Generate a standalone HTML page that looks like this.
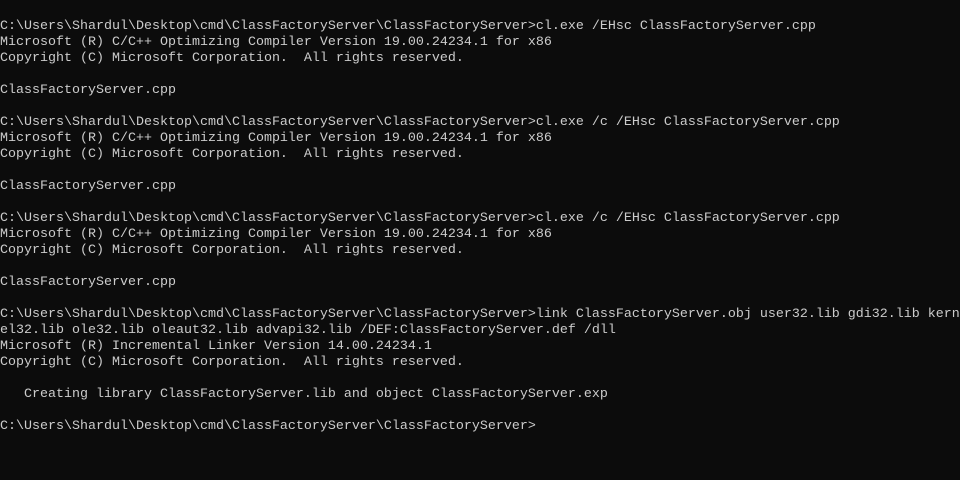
<!DOCTYPE html><html><head><style>
html,body{margin:0;background:#0c0c0c;width:960px;height:480px;overflow:hidden}
pre{margin:0;padding:19px 0 0 0;color:#cccccc;font-family:"Liberation Mono",monospace;font-size:13.33px;line-height:16px;white-space:pre}
</style></head><body><pre>C:\Users\Shardul\Desktop\cmd\ClassFactoryServer\ClassFactoryServer>cl.exe /EHsc ClassFactoryServer.cpp
Microsoft (R) C/C++ Optimizing Compiler Version 19.00.24234.1 for x86
Copyright (C) Microsoft Corporation.  All rights reserved.

ClassFactoryServer.cpp

C:\Users\Shardul\Desktop\cmd\ClassFactoryServer\ClassFactoryServer>cl.exe /c /EHsc ClassFactoryServer.cpp
Microsoft (R) C/C++ Optimizing Compiler Version 19.00.24234.1 for x86
Copyright (C) Microsoft Corporation.  All rights reserved.

ClassFactoryServer.cpp

C:\Users\Shardul\Desktop\cmd\ClassFactoryServer\ClassFactoryServer>cl.exe /c /EHsc ClassFactoryServer.cpp
Microsoft (R) C/C++ Optimizing Compiler Version 19.00.24234.1 for x86
Copyright (C) Microsoft Corporation.  All rights reserved.

ClassFactoryServer.cpp

C:\Users\Shardul\Desktop\cmd\ClassFactoryServer\ClassFactoryServer>link ClassFactoryServer.obj user32.lib gdi32.lib kern
el32.lib ole32.lib oleaut32.lib advapi32.lib /DEF:ClassFactoryServer.def /dll
Microsoft (R) Incremental Linker Version 14.00.24234.1
Copyright (C) Microsoft Corporation.  All rights reserved.

   Creating library ClassFactoryServer.lib and object ClassFactoryServer.exp

C:\Users\Shardul\Desktop\cmd\ClassFactoryServer\ClassFactoryServer></pre></body></html>
